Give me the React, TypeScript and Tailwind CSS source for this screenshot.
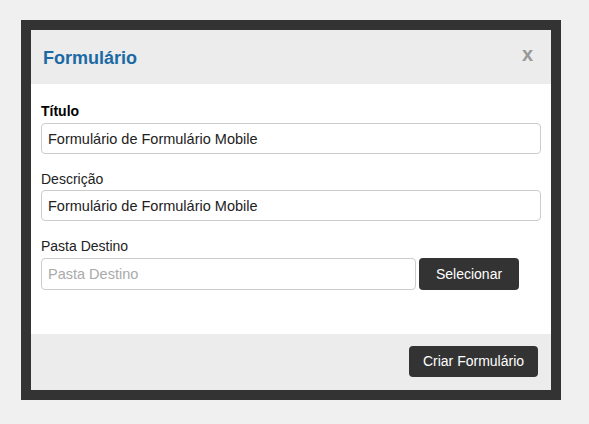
export default function App() {
  return (
    <div className="min-h-screen w-full bg-[#f0f0f0] pl-[21px] pt-[20px] font-['Liberation_Sans',Arial,sans-serif]">
      <div className="w-[540px] h-[380px] border-[10px] border-[#333333] bg-white flex flex-col">
        {/* Header */}
        <div className="h-[54px] bg-[#ececec] flex items-center justify-between pl-[12px] pr-[18px]">
          <h1 className="text-[18px] font-bold text-[#1c6aa3] mt-[2px]">Formulário</h1>
          <span className="text-[20px] font-bold text-[#999999] leading-none -mt-[6px]">x</span>
        </div>

        {/* Body */}
        <div className="h-[250px] px-[10px] pt-[17px]">
          <label className="block text-[14px] font-bold text-black leading-[20px] mb-[2px]">Título</label>
          <input
            className="block w-full h-[31px] border border-[#cccccc] rounded-[4px] px-[6px] text-[14.5px] text-[#222] outline-none"
            defaultValue="Formulário de Formulário Mobile"
          />

          <label className="block text-[14px] text-[#222] leading-[20px] mt-[15px] mb-[1px]">Descrição</label>
          <input
            className="block w-full h-[31px] border border-[#cccccc] rounded-[4px] px-[6px] text-[14.5px] text-[#222] outline-none"
            defaultValue="Formulário de Formulário Mobile"
          />

          <label className="block text-[14px] text-[#222] leading-[20px] mt-[15px] mb-[2px]">Pasta Destino</label>
          <div className="flex items-center">
            <input
              className="block w-[375px] h-[32px] border border-[#cccccc] rounded-[4px] px-[6px] text-[14.5px] text-[#222] placeholder:text-[#aaaaaa] outline-none"
              placeholder="Pasta Destino"
            />
            <button className="ml-[3px] w-[100px] h-[32px] bg-[#333333] text-white text-[14px] rounded-[4px]">
              Selecionar
            </button>
          </div>
        </div>

        {/* Footer */}
        <div className="flex-1 bg-[#ececec] flex justify-end items-start pt-[12px] pr-[13px]">
          <button className="w-[129px] h-[31px] bg-[#333333] text-white text-[14px] rounded-[4px]">
            Criar Formulário
          </button>
        </div>
      </div>
    </div>
  );
}
